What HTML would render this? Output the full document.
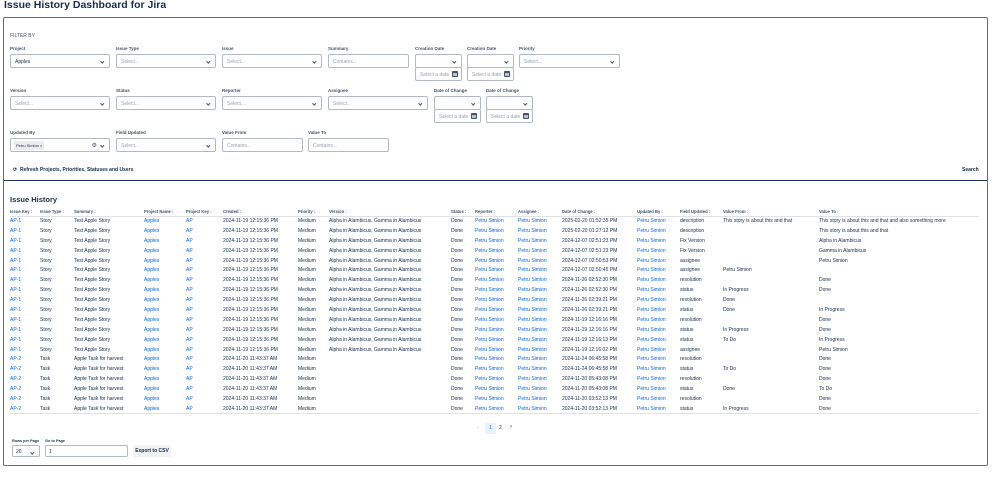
<!DOCTYPE html>
<html><head><meta charset="utf-8"><style>
*{box-sizing:border-box;margin:0;padding:0}
body{width:999px;height:478px;background:#fff;font-family:"Liberation Sans",sans-serif;color:#172b4d;position:relative;overflow:hidden}
.a{position:absolute}
.t{font-size:10.5px;font-weight:bold;color:#172b4d;left:4px;top:-1px}
.box{left:3px;top:17px;width:985px;height:449px;border:1px solid #5e6c84;border-radius:2px}
.hr{left:4px;top:180px;width:983px;height:1px;background:#1f3358}
.lb{font-size:4.5px;font-weight:bold;color:#42526e;white-space:nowrap}
.in{height:14px;border:1px solid #b3b9c4;border-radius:2px;font-size:5px;color:#97a0af;padding:4px 4px;background:#fff}
.in.dv{color:#172b4d}
.ch::after{content:"";position:absolute;right:6px;top:5px;width:1.5px;height:1.5px;border-right:1px solid #42526e;border-bottom:1px solid #42526e;transform:rotate(45deg)}
.cal{position:absolute;right:3px;top:3px;width:6px;height:6px;background:#44546f;border-radius:1px}
.cal::after{content:"";position:absolute;left:1px;top:2px;width:4px;height:3px;background:#b8c0cc}
table{position:absolute;left:10px;top:207px;border-collapse:collapse;table-layout:fixed;font-size:5px}
th{font-size:4.2px;font-weight:bold;color:#42526e;text-align:left;height:9px;border-bottom:1px solid #dfe1e6;white-space:nowrap;overflow:hidden}
td{height:9.9px;white-space:nowrap;overflow:hidden;color:#172b4d}
tr:last-child td{border-bottom:1px solid #dfe1e6}
.l{color:#0c66e4}
</style></head><body>
<div class="a t">Issue History Dashboard for Jira</div>
<div class="a box"></div>
<div class="a" style="left:10px;top:33px;font-size:5px;color:#42526e">FILTER BY</div>

<div class="a lb" style="left:10px;top:46px">Project</div><div class="a in dv ch" style="left:10px;top:54px;width:100px">Apples</div>
<div class="a lb" style="left:116px;top:46px">Issue Type</div><div class="a in ch" style="left:116px;top:54px;width:100px">Select...</div>
<div class="a lb" style="left:222px;top:46px">Issue</div><div class="a in ch" style="left:222px;top:54px;width:100px">Select...</div>
<div class="a lb" style="left:328px;top:46px">Summary</div><div class="a in" style="left:328px;top:54px;width:81px">Contains...</div>
<div class="a lb" style="left:415px;top:46px">Creation Date</div><div class="a in ch" style="left:415px;top:54px;width:47px"></div><div class="a in" style="left:415px;top:67px;width:47px">Select a date<span class="cal"></span></div>
<div class="a lb" style="left:467px;top:46px">Creation Date</div><div class="a in ch" style="left:467px;top:54px;width:47px"></div><div class="a in" style="left:467px;top:67px;width:47px">Select a date<span class="cal"></span></div>
<div class="a lb" style="left:519px;top:46px">Priority</div><div class="a in ch" style="left:519px;top:54px;width:101px">Select...</div>

<div class="a lb" style="left:10px;top:88px">Version</div><div class="a in ch" style="left:10px;top:96px;width:100px">Select...</div>
<div class="a lb" style="left:116px;top:88px">Status</div><div class="a in ch" style="left:116px;top:96px;width:100px">Select...</div>
<div class="a lb" style="left:222px;top:88px">Reporter</div><div class="a in ch" style="left:222px;top:96px;width:100px">Select...</div>
<div class="a lb" style="left:328px;top:88px">Assignee</div><div class="a in ch" style="left:328px;top:96px;width:100px">Select...</div>
<div class="a lb" style="left:434px;top:88px">Date of Change</div><div class="a in ch" style="left:434px;top:96px;width:47px"></div><div class="a in" style="left:434px;top:109px;width:47px">Select a date<span class="cal"></span></div>
<div class="a lb" style="left:486px;top:88px">Date of Change</div><div class="a in ch" style="left:486px;top:96px;width:47px"></div><div class="a in" style="left:486px;top:109px;width:47px">Select a date<span class="cal"></span></div>

<div class="a lb" style="left:10px;top:130px">Updated By</div><div class="a in ch" style="left:10px;top:138px;width:100px;padding:2px 3px"><span style="display:inline-block;background:#ebecf0;color:#172b4d;font-size:4px;padding:2px 2px">Petru Simion ×</span><span style="position:absolute;right:12px;top:3px;color:#42526e;font-size:6px">⚙</span></div>
<div class="a lb" style="left:116px;top:130px">Field Updated</div><div class="a in ch" style="left:116px;top:138px;width:100px">Select...</div>
<div class="a lb" style="left:222px;top:130px">Value From</div><div class="a in" style="left:222px;top:138px;width:81px">Contains...</div>
<div class="a lb" style="left:308px;top:130px">Value To</div><div class="a in" style="left:308px;top:138px;width:81px">Contains...</div>

<div class="a" style="left:13px;top:167px;font-size:5px;font-weight:bold;color:#172b4d">⟳&nbsp; Refresh Projects, Priorities, Statuses and Users</div>
<div class="a" style="left:962px;top:167px;font-size:5px;font-weight:bold">Search</div>
<div class="a hr"></div>
<div class="a" style="left:10px;top:195px;font-size:7.5px;font-weight:bold">Issue History</div>

<table>
<colgroup><col style="width:30px"><col style="width:34px"><col style="width:70px"><col style="width:42px"><col style="width:37px"><col style="width:75px"><col style="width:31px"><col style="width:122px"><col style="width:24px"><col style="width:43px"><col style="width:44px"><col style="width:75px"><col style="width:43px"><col style="width:43px"><col style="width:96px"><col style="width:160px"></colgroup>
<tr><th>Issue Key :</th><th>Issue Type :</th><th>Summary :</th><th>Project Name :</th><th>Project Key :</th><th>Created :</th><th>Priority :</th><th>Version :</th><th>Status :</th><th>Reporter :</th><th>Assignee :</th><th>Date of Change :</th><th>Updated By :</th><th>Field Updated :</th><th>Value From :</th><th>Value To :</th></tr>
<tr><td class="l">AP-1</td><td>Story</td><td>Test Apple Story</td><td class="l">Apples</td><td class="l">AP</td><td>2024-11-19 12:15:36 PM</td><td>Medium</td><td>Alpha in Alambicus, Gamma in Alambicus</td><td>Done</td><td class="l">Petru Simion</td><td class="l">Petru Simion</td><td>2025-02-20 01:52:35 PM</td><td class="l">Petru Simion</td><td>description</td><td>This story is about this and that</td><td>This story is about this and that and also something more</td></tr>
<tr><td class="l">AP-1</td><td>Story</td><td>Test Apple Story</td><td class="l">Apples</td><td class="l">AP</td><td>2024-11-19 12:15:36 PM</td><td>Medium</td><td>Alpha in Alambicus, Gamma in Alambicus</td><td>Done</td><td class="l">Petru Simion</td><td class="l">Petru Simion</td><td>2025-02-20 01:27:12 PM</td><td class="l">Petru Simion</td><td>description</td><td></td><td>This story is about this and that</td></tr>
<tr><td class="l">AP-1</td><td>Story</td><td>Test Apple Story</td><td class="l">Apples</td><td class="l">AP</td><td>2024-11-19 12:15:36 PM</td><td>Medium</td><td>Alpha in Alambicus, Gamma in Alambicus</td><td>Done</td><td class="l">Petru Simion</td><td class="l">Petru Simion</td><td>2024-12-07 02:51:23 PM</td><td class="l">Petru Simion</td><td>Fix Version</td><td></td><td>Alpha in Alambicus</td></tr>
<tr><td class="l">AP-1</td><td>Story</td><td>Test Apple Story</td><td class="l">Apples</td><td class="l">AP</td><td>2024-11-19 12:15:36 PM</td><td>Medium</td><td>Alpha in Alambicus, Gamma in Alambicus</td><td>Done</td><td class="l">Petru Simion</td><td class="l">Petru Simion</td><td>2024-12-07 02:51:23 PM</td><td class="l">Petru Simion</td><td>Fix Version</td><td></td><td>Gamma in Alambicus</td></tr>
<tr><td class="l">AP-1</td><td>Story</td><td>Test Apple Story</td><td class="l">Apples</td><td class="l">AP</td><td>2024-11-19 12:15:36 PM</td><td>Medium</td><td>Alpha in Alambicus, Gamma in Alambicus</td><td>Done</td><td class="l">Petru Simion</td><td class="l">Petru Simion</td><td>2024-12-07 02:50:53 PM</td><td class="l">Petru Simion</td><td>assignee</td><td></td><td>Petru Simion</td></tr>
<tr><td class="l">AP-1</td><td>Story</td><td>Test Apple Story</td><td class="l">Apples</td><td class="l">AP</td><td>2024-11-19 12:15:36 PM</td><td>Medium</td><td>Alpha in Alambicus, Gamma in Alambicus</td><td>Done</td><td class="l">Petru Simion</td><td class="l">Petru Simion</td><td>2024-12-07 02:50:45 PM</td><td class="l">Petru Simion</td><td>assignee</td><td>Petru Simion</td><td></td></tr>
<tr><td class="l">AP-1</td><td>Story</td><td>Test Apple Story</td><td class="l">Apples</td><td class="l">AP</td><td>2024-11-19 12:15:36 PM</td><td>Medium</td><td>Alpha in Alambicus, Gamma in Alambicus</td><td>Done</td><td class="l">Petru Simion</td><td class="l">Petru Simion</td><td>2024-11-26 02:52:30 PM</td><td class="l">Petru Simion</td><td>resolution</td><td></td><td>Done</td></tr>
<tr><td class="l">AP-1</td><td>Story</td><td>Test Apple Story</td><td class="l">Apples</td><td class="l">AP</td><td>2024-11-19 12:15:36 PM</td><td>Medium</td><td>Alpha in Alambicus, Gamma in Alambicus</td><td>Done</td><td class="l">Petru Simion</td><td class="l">Petru Simion</td><td>2024-11-26 02:52:30 PM</td><td class="l">Petru Simion</td><td>status</td><td>In Progress</td><td>Done</td></tr>
<tr><td class="l">AP-1</td><td>Story</td><td>Test Apple Story</td><td class="l">Apples</td><td class="l">AP</td><td>2024-11-19 12:15:36 PM</td><td>Medium</td><td>Alpha in Alambicus, Gamma in Alambicus</td><td>Done</td><td class="l">Petru Simion</td><td class="l">Petru Simion</td><td>2024-11-26 02:39:21 PM</td><td class="l">Petru Simion</td><td>resolution</td><td>Done</td><td></td></tr>
<tr><td class="l">AP-1</td><td>Story</td><td>Test Apple Story</td><td class="l">Apples</td><td class="l">AP</td><td>2024-11-19 12:15:36 PM</td><td>Medium</td><td>Alpha in Alambicus, Gamma in Alambicus</td><td>Done</td><td class="l">Petru Simion</td><td class="l">Petru Simion</td><td>2024-11-26 02:39:21 PM</td><td class="l">Petru Simion</td><td>status</td><td>Done</td><td>In Progress</td></tr>
<tr><td class="l">AP-1</td><td>Story</td><td>Test Apple Story</td><td class="l">Apples</td><td class="l">AP</td><td>2024-11-19 12:15:36 PM</td><td>Medium</td><td>Alpha in Alambicus, Gamma in Alambicus</td><td>Done</td><td class="l">Petru Simion</td><td class="l">Petru Simion</td><td>2024-11-19 12:16:16 PM</td><td class="l">Petru Simion</td><td>resolution</td><td></td><td>Done</td></tr>
<tr><td class="l">AP-1</td><td>Story</td><td>Test Apple Story</td><td class="l">Apples</td><td class="l">AP</td><td>2024-11-19 12:15:36 PM</td><td>Medium</td><td>Alpha in Alambicus, Gamma in Alambicus</td><td>Done</td><td class="l">Petru Simion</td><td class="l">Petru Simion</td><td>2024-11-19 12:16:16 PM</td><td class="l">Petru Simion</td><td>status</td><td>In Progress</td><td>Done</td></tr>
<tr><td class="l">AP-1</td><td>Story</td><td>Test Apple Story</td><td class="l">Apples</td><td class="l">AP</td><td>2024-11-19 12:15:36 PM</td><td>Medium</td><td>Alpha in Alambicus, Gamma in Alambicus</td><td>Done</td><td class="l">Petru Simion</td><td class="l">Petru Simion</td><td>2024-11-19 12:16:13 PM</td><td class="l">Petru Simion</td><td>status</td><td>To Do</td><td>In Progress</td></tr>
<tr><td class="l">AP-1</td><td>Story</td><td>Test Apple Story</td><td class="l">Apples</td><td class="l">AP</td><td>2024-11-19 12:15:36 PM</td><td>Medium</td><td>Alpha in Alambicus, Gamma in Alambicus</td><td>Done</td><td class="l">Petru Simion</td><td class="l">Petru Simion</td><td>2024-11-19 12:16:02 PM</td><td class="l">Petru Simion</td><td>assignee</td><td></td><td>Petru Simion</td></tr>
<tr><td class="l">AP-2</td><td>Task</td><td>Apple Task for harvest</td><td class="l">Apples</td><td class="l">AP</td><td>2024-11-20 11:43:37 AM</td><td>Medium</td><td></td><td>Done</td><td class="l">Petru Simion</td><td class="l">Petru Simion</td><td>2024-11-24 06:45:58 PM</td><td class="l">Petru Simion</td><td>resolution</td><td></td><td>Done</td></tr>
<tr><td class="l">AP-2</td><td>Task</td><td>Apple Task for harvest</td><td class="l">Apples</td><td class="l">AP</td><td>2024-11-20 11:43:37 AM</td><td>Medium</td><td></td><td>Done</td><td class="l">Petru Simion</td><td class="l">Petru Simion</td><td>2024-11-24 06:45:58 PM</td><td class="l">Petru Simion</td><td>status</td><td>To Do</td><td>Done</td></tr>
<tr><td class="l">AP-2</td><td>Task</td><td>Apple Task for harvest</td><td class="l">Apples</td><td class="l">AP</td><td>2024-11-20 11:43:37 AM</td><td>Medium</td><td></td><td>Done</td><td class="l">Petru Simion</td><td class="l">Petru Simion</td><td>2024-11-20 05:43:08 PM</td><td class="l">Petru Simion</td><td>resolution</td><td></td><td>Done</td></tr>
<tr><td class="l">AP-2</td><td>Task</td><td>Apple Task for harvest</td><td class="l">Apples</td><td class="l">AP</td><td>2024-11-20 11:43:37 AM</td><td>Medium</td><td></td><td>Done</td><td class="l">Petru Simion</td><td class="l">Petru Simion</td><td>2024-11-20 05:43:08 PM</td><td class="l">Petru Simion</td><td>status</td><td>Done</td><td>To Do</td></tr>
<tr><td class="l">AP-2</td><td>Task</td><td>Apple Task for harvest</td><td class="l">Apples</td><td class="l">AP</td><td>2024-11-20 11:43:37 AM</td><td>Medium</td><td></td><td>Done</td><td class="l">Petru Simion</td><td class="l">Petru Simion</td><td>2024-11-20 03:52:13 PM</td><td class="l">Petru Simion</td><td>resolution</td><td></td><td>Done</td></tr>
<tr><td class="l">AP-2</td><td>Task</td><td>Apple Task for harvest</td><td class="l">Apples</td><td class="l">AP</td><td>2024-11-20 11:43:37 AM</td><td>Medium</td><td></td><td>Done</td><td class="l">Petru Simion</td><td class="l">Petru Simion</td><td>2024-11-20 03:52:13 PM</td><td class="l">Petru Simion</td><td>status</td><td>In Progress</td><td>Done</td></tr>
</table>

<div class="a" style="left:477px;top:425px;font-size:5px;color:#97a0af">‹</div>
<div class="a" style="left:485px;top:423px;width:11px;height:11px;background:#e9f2ff;color:#0c66e4;font-size:5px;text-align:center;line-height:11px">1</div>
<div class="a" style="left:499px;top:425px;font-size:5px">2</div>
<div class="a" style="left:510px;top:424px;font-size:6px">›</div>

<div class="a lb" style="left:12px;top:439px;color:#172b4d;font-size:3.8px">Rows per Page</div>
<div class="a in dv ch" style="left:12px;top:445px;width:28px;height:12px;padding:3px 3px">20</div>
<div class="a lb" style="left:45px;top:439px;color:#172b4d;font-size:3.8px">Go to Page</div>
<div class="a in dv" style="left:45px;top:445px;width:83px;height:12px;padding:3px 3px;border-width:1.5px">1</div>
<div class="a" style="left:133px;top:445px;width:38px;height:12px;background:#f1f2f4;font-size:5px;font-weight:bold;text-align:center;line-height:12px">Export to CSV</div>
</body></html>
